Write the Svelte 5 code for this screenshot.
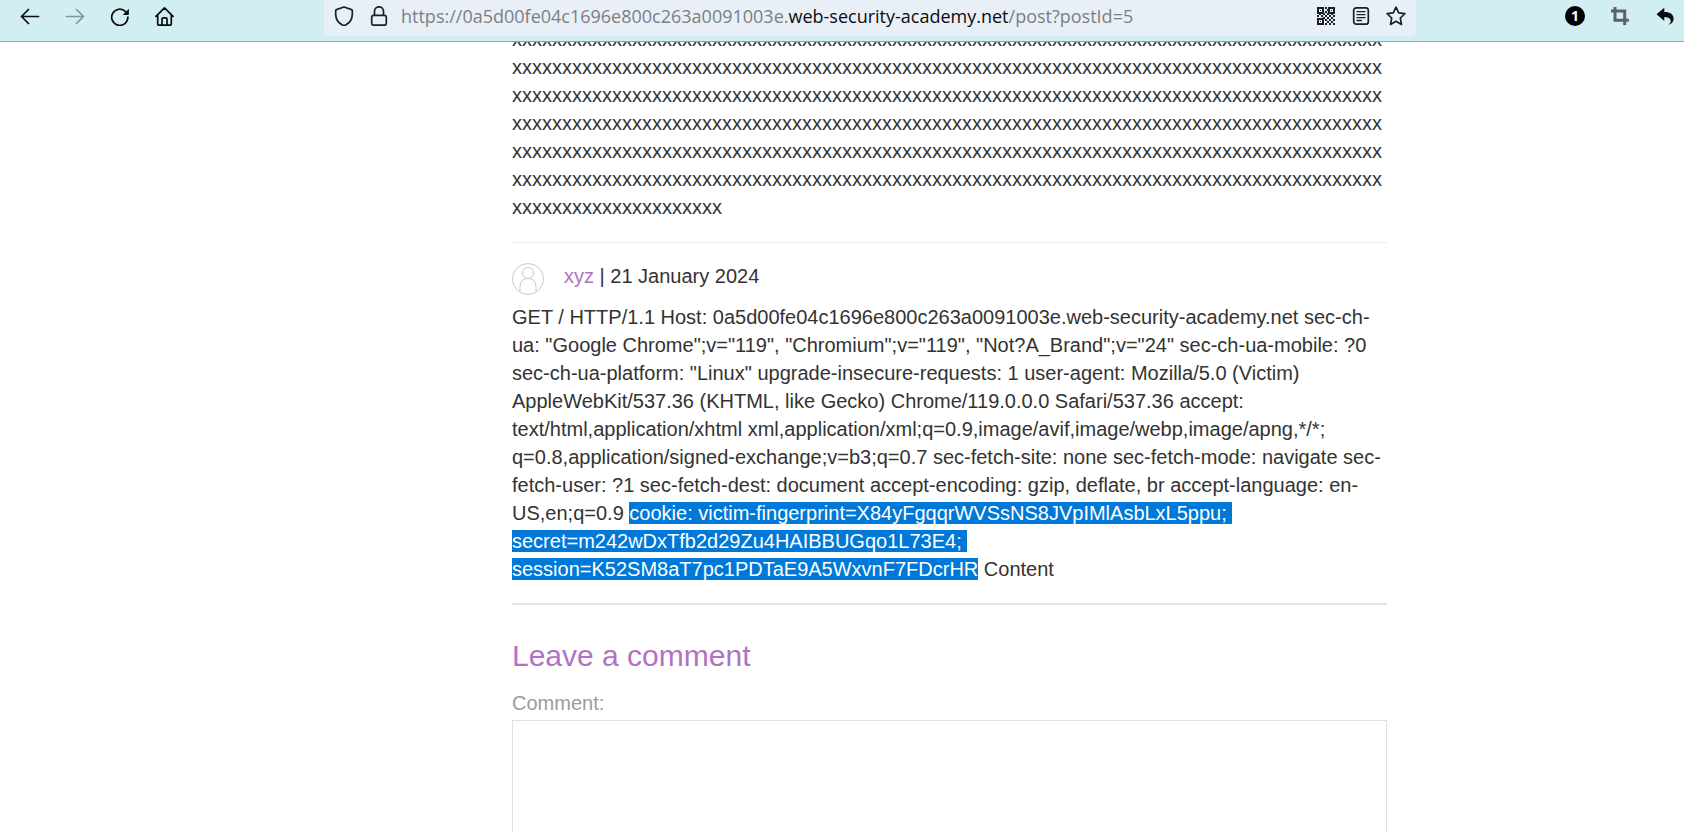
<script>
  const filler = 'x'.repeat(87 * 6 + 21);

  // Dark modules of the QR glyph between and below the three finder squares.
  const modules = [
    [9, 2], [9, 6], [7, 8], [11, 4], [1, 10], [5, 10], [9, 10], [13, 10], [17, 10],
    [3, 8], [15, 8], [11, 8], [7, 12], [11, 12], [15, 12], [9, 14], [13, 14], [17, 14],
    [11, 16], [15, 16], [9, 18], [13, 18], [17, 18]
  ];
</script>

<div class="window">
  <header class="toolbar">
    <nav class="group nav">
      <button aria-label="Back">
        <svg viewBox="0 0 20 20"><path class="line" d="M18.5 10.5h-17M8.500 3.500l-7 7 7 7" /></svg>
      </button>
      <button aria-label="Forward" class="dim">
        <svg viewBox="0 0 20 20"><path class="line" d="M1.500 10.500h17M11.500 3.500l7 7-7 7" /></svg>
      </button>
      <button aria-label="Reload">
        <svg viewBox="0 0 20 20">
          <path class="line" d="M15.6 5.6A8.1 8.1 0 1 0 17.9 11" />
          <path d="M18.9 2.8v5.4a.7.7 0 0 1-.7.7h-5.4z" />
        </svg>
      </button>
      <button aria-label="Home">
        <svg viewBox="0 0 20 20">
          <path class="line" d="M.9 10.3L9.500 1.8l8.600 8.500M2.700 8.800v9.200q0 1.200 1.200 1.200h11.200q1.200 0 1.200-1.200V8.800M7 19v-6q0-1.200 1.200-1.200h2.600q1.200 0 1.200 1.200v6" />
        </svg>
      </button>
    </nav>

    <div class="urlbar">
      <button aria-label="Tracking protection">
        <svg viewBox="0 0 20 20"><path class="line" d="M10 1l7.600 2.600q.7.200.7 1v3.600q0 7.300-6.700 10.700-1.600.8-3.200 0Q1.700 15.500 1.700 8.200V4.600q0-.8.7-1z" /></svg>
      </button>
      <button aria-label="Connection secure">
        <svg viewBox="0 0 20 20">
          <rect class="line" x="2.7" y="9.3" width="14.6" height="9.9" rx="2" />
          <path class="line" d="M5.500 9V5.300a4.500 4.500 0 0 1 9 0V9" />
        </svg>
      </button>
      <div class="address" role="textbox" tabindex="0" aria-label="Address">https://0a5d00fe04c1696e800c263a0091003e.<b>web-security-academy.net</b>/post?postId=5</div>
      <button aria-label="QR code">
        <svg viewBox="0 0 20 20">
          <path class="finder" d="M2 2h5v5H2zM13 2h5v5h-5zM2 13h5v5H2z" />
          <path d="M4 4h1v1H4zM15 4h1v1h-1zM4 15h1v1H4z" />
          {#each modules as [x, y]}
            <rect x={x} y={y - 1} width="2" height="2" />
          {/each}
        </svg>
      </button>
      <button aria-label="Reader view">
        <svg viewBox="0 0 20 20">
          <rect class="line" x="2.7" y="1.8" width="14.6" height="16.4" rx="2.5" />
          <path class="thin" d="M6 5.700h8M6 8.700h8M6 11.700h8M6 14.500h4.500" />
        </svg>
      </button>
      <button aria-label="Bookmark">
        <svg viewBox="0 0 20 20"><path class="line" d="M10 1.200l2.700 5.700 6.200.8-4.600 4.300 1.200 6.400-5.500-3.100-5.500 3.100L5.700 12 1.100 7.700l6.200-.8z" /></svg>
      </button>
    </div>

    <div class="group tools">
      <button aria-label="One notification"><span class="badge">1</span></button>
      <button aria-label="Crop" class="slate">
        <svg viewBox="0 0 20 20"><path class="thick" d="M5 1v13.300h13.800M1 5h13.700v14" /></svg>
      </button>
      <button aria-label="Undo">
        <svg viewBox="0 0 20 20"><path d="M1.500 8.200L9.300 1.800v4.100c6 0 9.300 2.600 9.300 6.900 0 3.200-2.200 5.300-5.200 6 2.300-1.600 2.800-3.300 2-5-.8-1.800-2.800-2.700-6.100-2.700v4z" /></svg>
      </button>
    </div>
  </header>

  <main>
    <article>
      <section class="comment">
        <p class="filler">{filler}</p>
      </section>
      <section class="comment bordered">
        <p class="byline">
          <svg class="avatar" viewBox="0 0 32 32" aria-hidden="true">
            <circle cx="16" cy="16" r="15.5" />
            <circle cx="16" cy="10" r="5.5" />
            <path d="M8 29v-5.500Q8 15.500 16 15.500t8 8V29" />
          </svg>
          <span><a href="#author">xyz</a> | 21 January 2024</span>
        </p>
        <p>GET / HTTP/1.1 Host: 0a5d00fe04c1696e800c263a0091003e.web-security-academy.net sec-ch-<wbr />ua: "Google Chrome";v="119", "Chromium";v="119", "Not?A_Brand";v="24" sec-ch-ua-mobile: ?0 sec-ch-ua-platform: "Linux" upgrade-insecure-requests: 1 user-agent: Mozilla/5.0 (Victim) AppleWebKit/537.36 (KHTML, like Gecko) Chrome/119.0.0.0 Safari/537.36 accept: text/html,application/xhtml xml,application/xml;q=0.9,image/avif,image/webp,image/apng,*/*;<wbr />q=0.8,application/signed-exchange;v=b3;q=0.7 sec-fetch-site: none sec-fetch-mode: navigate sec-fetch-user: ?1 sec-fetch-dest: document accept-encoding: gzip, deflate, br accept-language: en-US,en;q=0.9 <mark>cookie: victim-fingerprint=X84yFgqqrWVSsNS8JVpIMlAsbLxL5ppu; secret=m242wDxTfb2d29Zu4HAIBBUGqo1L73E4; session=K52SM8aT7pc1PDTaE9A5WxvnF7FDcrHR</mark> Content</p>
      </section>
      <form>
        <h2>Leave a comment</h2>
        <label for="comment">Comment:</label>
        <textarea id="comment" rows="12"></textarea>
      </form>
    </article>
  </main>
</div>

<style>
  :global(body) {
    margin: 0;
    background: #fff;
  }

  .window {
    display: flex;
    flex-direction: column;
    height: 100vh;
    overflow: hidden;
    font: 20px/28px "Liberation Sans", Arial, sans-serif;
    color: #333332;
  }

  .toolbar {
    flex: none;
    display: grid;
    grid-template-columns: 324px 1fr 268px;
    align-items: start;
    padding-bottom: 5px;
    background: #d1eef2;
    border-bottom: 1px solid #8fa9ae;
  }

  .group,
  .urlbar {
    display: flex;
    align-items: center;
    height: 32px;
  }

  .group {
    gap: 25px;
  }

  .nav {
    padding-left: 20px;
  }

  .tools {
    justify-content: flex-end;
    padding-right: 9px;
  }

  .urlbar {
    gap: 15px;
    padding: 0 10px 4px;
    border-radius: 0 0 5px 5px;
    background: #e9eff6;
  }

  button {
    flex: none;
    width: 20px;
    height: 20px;
    padding: 0;
    border: 0;
    background: none;
    color: #0c0c0d;
  }

  .urlbar button {
    color: #1d2022;
  }

  button.dim {
    color: #839598;
  }

  button.slate {
    color: #5b5f68;
  }

  svg {
    display: block;
    fill: currentColor;
  }

  .line,
  .thin,
  .thick,
  .finder {
    fill: none;
    stroke: currentColor;
    stroke-width: 1.7;
    stroke-linecap: round;
    stroke-linejoin: round;
  }

  .thin {
    stroke-width: 1.3;
  }

  .thick {
    stroke-width: 3;
    stroke-linecap: butt;
    stroke-linejoin: miter;
  }

  .finder {
    stroke-width: 2;
    stroke-linejoin: miter;
  }

  .badge {
    display: block;
    border-radius: 50%;
    background: #000;
    color: #fff;
    font: 700 14px/20px "Open Sans", sans-serif;
  }

  .address {
    flex: 1;
    min-width: 0;
    margin-left: -3px;
    overflow: hidden;
    white-space: nowrap;
    font: 18px/28px "Open Sans", sans-serif;
    color: #7b7f83;
  }

  .address b {
    font-weight: 400;
    color: #0c0c0d;
  }

  main {
    flex: 1;
    min-height: 0;
    overflow: hidden;
    display: grid;
    grid-template-columns: 512fr 875fr 297fr;
  }

  article {
    grid-column: 2;
    min-width: 0;
  }

  p {
    margin: 0;
  }

  .filler {
    margin-top: -17px;
    word-break: break-all;
  }

  .comment {
    padding-bottom: 21px;
  }

  .bordered {
    padding: 20px 0;
    border-top: 1px solid #ededed;
    border-bottom: 2px solid #e5e5e5;
  }

  .byline {
    display: flex;
    gap: 20px;
    margin-bottom: 8px;
  }

  .byline span {
    margin-top: -1px;
  }

  .avatar {
    width: 32px;
    height: 32px;
    fill: none;
    stroke: #c6cbcd;
  }

  a,
  h2 {
    color: #b172c5;
    text-decoration: none;
  }

  mark {
    background: #0078d7;
    color: #fff;
    white-space: pre-wrap;
  }

  h2 {
    margin: 0 0 13px;
    font-size: 30px;
    line-height: 40px;
    font-weight: 400;
  }

  form {
    padding-top: 31px;
  }

  label {
    display: block;
    margin-bottom: 3px;
    color: #9b9b9b;
  }

  textarea {
    display: block;
    box-sizing: border-box;
    width: 100%;
    border: 1px solid #e1e1e1;
    padding: 8px;
    background: #fff;
    font: inherit;
    resize: none;
  }
</style>
